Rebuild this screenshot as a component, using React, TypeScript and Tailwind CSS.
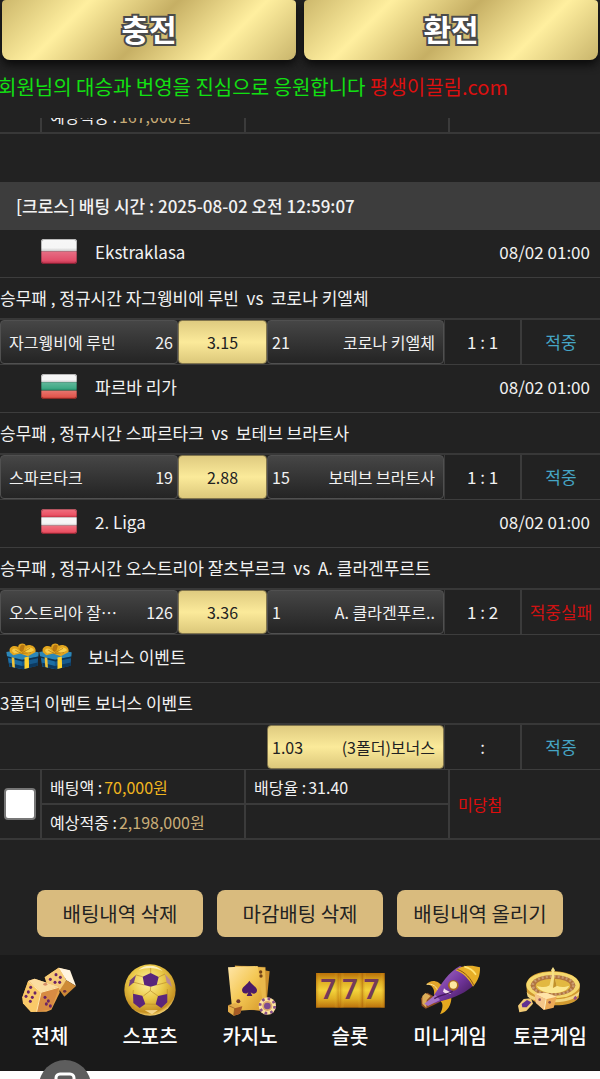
import { useState } from 'react';
import type { ReactNode } from 'react';

interface Match {
  league: string;
  flag: string[];
  time: string;
  title: string;
  home: string;
  homeOdds: string;
  drawOdds: string;
  awayOdds: string;
  away: string;
  score: string;
  status: string;
  won: boolean;
}

const matches: Match[] = [
  {
    league: 'Ekstraklasa',
    flag: ['#f4f4f4', '#dc3050'],
    time: '08/02 01:00',
    title: '승무패 , 정규시간 자그웽비에 루빈  vs  코로나 키엘체',
    home: '자그웽비에 루빈',
    homeOdds: '26',
    drawOdds: '3.15',
    awayOdds: '21',
    away: '코로나 키엘체',
    score: '1 : 1',
    status: '적중',
    won: true
  },
  {
    league: '파르바 리가',
    flag: ['#f4f4f4', '#1f9a70', '#dc3a30'],
    time: '08/02 01:00',
    title: '승무패 , 정규시간 스파르타크  vs  보테브 브라트사',
    home: '스파르타크',
    homeOdds: '19',
    drawOdds: '2.88',
    awayOdds: '15',
    away: '보테브 브라트사',
    score: '1 : 1',
    status: '적중',
    won: true
  },
  {
    league: '2. Liga',
    flag: ['#e8354a', '#f4f4f4', '#e8354a'],
    time: '08/02 01:00',
    title: '승무패 , 정규시간 오스트리아 잘츠부르크  vs  A. 클라겐푸르트',
    home: '오스트리아 잘⋯',
    homeOdds: '126',
    drawOdds: '3.36',
    awayOdds: '1',
    away: 'A. 클라겐푸르..',
    score: '1 : 2',
    status: '적중실패',
    won: false
  }
];

function Flag({ colors }: { colors: string[] }) {
  const h = 25 / colors.length;
  return (
    <svg viewBox="0 0 36 25" className="h-[25px] w-9 rounded-[3px]" aria-hidden="true">
      <defs>
        <linearGradient id="gloss" x1="0" y1="0" x2="0" y2="1">
          <stop offset="0" stopColor="#fff" stopOpacity="0.3" />
          <stop offset="0.7" stopColor="#fff" stopOpacity="0.15" />
          <stop offset="1" stopColor="#000" stopOpacity="0.2" />
        </linearGradient>
      </defs>
      {colors.map((color, i) => (
        <g key={i}>
          <rect y={i * h} width="36" height={h} fill={color} />
          <rect y={i * h} width="36" height={h} fill="url(#gloss)" />
        </g>
      ))}
      <rect x="0.5" y="0.5" width="35" height="24" rx="2.5" fill="none" stroke="#000" strokeOpacity="0.25" />
    </svg>
  );
}

function Gift() {
  return (
    <svg viewBox="18 252 100 82" className="h-[27px] w-[33px]" aria-hidden="true">
      <path d="M22 284 L66 293 L116 282 L114 321 L70 332 L28 323 Z" fill="#16598c" />
      <path d="M22 284 L66 293 L66 331 L28 323 Z" fill="#1c6fa5" />
      <path d="M28 312 L67 322 L114 311 V321 L70 332 L28 323 Z" fill="#0d395f" />
      <path d="M19 279 L62 272 L117 280 L116 293 L67 303 L21 292 Z" fill="#2c87b8" />
      <path d="M21 292 L67 303 L116 293 L115 298 L67 308 L23 297 Z" fill="#0b3455" />
      <path d="M35 295 L43 297 L45 327 L37 325 Z" fill="#efc23a" />
      <path d="M74 296 L87 293 L88 327 L74 331 Z" fill="#ffd22e" />
      <path d="M30 280 C24 268 38 256 55 264 C54 252 76 250 78 260 C93 254 112 264 107 280 L84 292 L61 284 L40 289 Z" fill="#e2a51e" />
      <path d="M36 276 C38 264 51 267 61 280 L43 284 Z" fill="#f6cb4a" />
      <path d="M61 276 C56 262 66 253 75 260 L70 278 Z" fill="#b87812" />
      <path d="M76 278 C81 262 98 262 103 274 L86 284 Z" fill="#f9cf4a" />
      <path d="M55 266 L68 281 L91 268 M46 274 L65 284 L94 281" fill="none" stroke="#a86f12" strokeWidth="2" />
    </svg>
  );
}

function DiceIcon() {
  const pips = [
    [92, 352], [85, 366], [105, 369], [78, 379], [97, 382], [91, 394],
    [135, 382], [145, 393], [151, 408], [139, 402],
    [151, 328], [168, 314], [165, 337], [181, 322], [179, 337]
  ];
  return (
    <svg viewBox="45 279 210 162" className="h-[54px] w-[70px]" aria-hidden="true">
      <path d="M134 322 L176 293 L202 300 L183 363 L142 349 Z" fill="#efb65c" />
      <path d="M176 293 L210 301 L228 348 L199 331 Z" fill="#fff4df" />
      <path d="M199 331 L228 348 L193 380 L176 357 Z" fill="#cd8a36" />
      <path d="M134 322 L176 293 L199 331 L180 359 L146 347 Z" fill="#f6cb78" />
      <path d="M85 332 L104 326 L176 350 L179 368 L154 419 L139 425 L93 426 L69 400 L67 382 Z" fill="#e5a04a" />
      <path d="M86 332 L104 326 L176 350 L123 367 Z" fill="#fbdda0" />
      <path d="M84 334 L123 367 L110 425 L93 426 L69 400 L67 382 Z" fill="#f9c969" />
      <path d="M123 367 L177 353 L154 418 L110 425 Z" fill="#d78b43" />
      <path d="M85 334 L123 367 L176 352 M123 367 L110 425" fill="none" stroke="#ffe8af" strokeWidth="3" />
      {pips.map(([x, y], i) => (
        <ellipse key={i} cx={x} cy={y} rx="4.5" ry="5" fill="#6b2466" />
      ))}
      <ellipse cx="136" cy="343" rx="6" ry="4" fill="#d58d68" />
      <ellipse cx="194" cy="364" rx="5" ry="4" fill="#6b2f43" />
    </svg>
  );
}

function BallIcon() {
  return (
    <svg viewBox="345 279 210 162" className="h-[54px] w-[70px]" aria-hidden="true">
      <defs>
        <radialGradient id="ball" cx="0.45" cy="0.35" r="0.65">
          <stop offset="0" stopColor="#fff3a2" />
          <stop offset="0.5" stopColor="#eac948" />
          <stop offset="0.9" stopColor="#c48f22" />
          <stop offset="1" stopColor="#f3d070" />
        </radialGradient>
        <clipPath id="ball-clip">
          <circle cx="450" cy="360" r="77" />
        </clipPath>
      </defs>
      <circle cx="450" cy="360" r="77" fill="url(#ball)" />
      <g clipPath="url(#ball-clip)">
        <path
          d="M452 350 L451 362 L430 378 M451 362 L474 378 M470 345 L500 337 M433 345 L402 337 M400 360 L399 371 M502 357 V372 M436 402 L467 403 M428 320 L408 315 M476 321 L495 312 M452 309 V290"
          fill="none"
          stroke="#b98b28"
          strokeWidth="2"
        />
        <path d="M452 309 L476 321 L470 345 L452 350 L433 345 L428 320 Z" fill="#59257b" />
        <path d="M399 371 L427 377 L436 402 L419 414 L400 399 Z" fill="#5b267a" />
        <path d="M474 378 L502 372 L502 397 L484 414 L467 403 Z" fill="#5b267a" />
        <path d="M408 315 L402 337 L386 350 L390 331 Z" fill="#74447c" />
        <path d="M495 312 L510 329 L516 352 L500 337 Z" fill="#b98a94" />
        <path d="M434 421 L474 420 L456 433 Z" fill="#f5d68c" />
        <path d="M416 300 C433 283 468 282 488 303 C463 291 440 292 416 300 Z" fill="#fff9d7" opacity="0.8" />
      </g>
    </svg>
  );
}

function CardsIcon() {
  return (
    <svg viewBox="645 279 210 162" className="h-[54px] w-[70px]" aria-hidden="true">
      <defs>
        <linearGradient id="card" x1="0" y1="0" x2="1" y2="1">
          <stop offset="0" stopColor="#ffe6a8" />
          <stop offset="0.5" stopColor="#f4c855" />
          <stop offset="1" stopColor="#d79a2a" />
        </linearGradient>
      </defs>
      <path d="M728 288 L809 304 L797 425 L715 414 Z" fill="#c98d2c" />
      <path d="M705 287 L796 292 L800 421 L713 417 Z" fill="#eab84b" stroke="#b98029" strokeWidth="1" />
      <path d="M684 292 L773 288 L791 417 L697 424 Z" fill="url(#card)" />
      <path d="M748 332 C754 344 771 350 771 361 C771 372 758 374 752 367 L757 378 H740 L745 367 C739 374 726 371 726 360 C727 349 743 343 748 332 Z" fill="#4b1b67" />
      <circle cx="782" cy="306" r="5" fill="#704017" />
      <circle cx="783" cy="318" r="5" fill="#704017" />
      <circle cx="715" cy="394" r="6" fill="#70372d" />
      <path d="M684 406 L705 399 L727 409 L720 431 L701 437 L684 425 Z" fill="#e5ad4a" />
      <path d="M704 415 L727 409 L720 431 L701 437 Z" fill="#a75a25" />
      <path d="M684 406 L704 415 L701 436" fill="none" stroke="#8a5620" strokeWidth="2" />
      <circle cx="802" cy="408" r="26" fill="#ffe4a1" />
      <circle cx="802" cy="408" r="22" fill="none" stroke="#88508a" strokeWidth="8" strokeDasharray="8 9.3" />
      <circle cx="802" cy="408" r="15" fill="#dcaa6b" />
      <circle cx="802" cy="408" r="10" fill="#7e4b8f" />
    </svg>
  );
}

function SlotIcon() {
  return (
    <svg viewBox="45 279 210 162" className="h-[54px] w-[70px]" aria-hidden="true">
      <defs>
        <linearGradient id="slot-v" x1="0" y1="0" x2="0" y2="1">
          <stop offset="0" stopColor="#b86f08" />
          <stop offset="0.25" stopColor="#dfae24" />
          <stop offset="0.5" stopColor="#f4d33b" />
          <stop offset="0.75" stopColor="#dfae24" />
          <stop offset="1" stopColor="#bb710c" />
        </linearGradient>
        <linearGradient id="slot-h">
          <stop offset="0" stopColor="#a85904" stopOpacity="0.5" />
          <stop offset="0.2" stopColor="#f4d33b" stopOpacity="0" />
          <stop offset="0.8" stopColor="#f4d33b" stopOpacity="0" />
          <stop offset="1" stopColor="#a85904" stopOpacity="0.5" />
        </linearGradient>
      </defs>
      <rect x="48" y="309" width="206" height="104" fill="url(#slot-v)" />
      {[48, 119, 186].map((x) => (
        <rect key={x} x={x} y="309" width="68" height="104" fill="url(#slot-h)" />
      ))}
      <g fill="#743b59" fontFamily="Roboto, sans-serif" fontSize="82" fontWeight="700" textAnchor="middle">
        <text x="85" y="387">7</text>
        <text x="150" y="387">7</text>
        <text x="215" y="387">7</text>
      </g>
    </svg>
  );
}

function RocketIcon() {
  return (
    <svg viewBox="345 279 210 162" className="h-[54px] w-[70px]" aria-hidden="true">
      <defs>
        <linearGradient id="rocket" x1="0" y1="0" x2="1" y2="1">
          <stop offset="0" stopColor="#b079cd" />
          <stop offset="0.5" stopColor="#7437a0" />
          <stop offset="1" stopColor="#351144" />
        </linearGradient>
      </defs>
      <path d="M382 368 L363 385 L365 407 L377 416 L403 404 L421 395 L403 380 Z" fill="#8f4e23" />
      <path d="M429 352 C415 328 391 328 379 343 C397 345 405 357 402 376 Z" fill="#e2a52b" />
      <path d="M380 343 C397 340 413 349 414 369" fill="none" stroke="#ffe69a" strokeWidth="3" />
      <path d="M421 393 C433 402 426 421 420 433 C442 426 455 404 454 381 Z" fill="#e6a91f" />
      <path d="M367 378 L376 369 L392 378 L380 391 L379 413 L367 401 Z" fill="#ddad58" />
      <path d="M402 376 C424 342 446 305 480 288 C497 294 514 315 522 344 C500 367 464 383 424 393 L405 400 Z" fill="url(#rocket)" />
      <path d="M373 401 L406 374 L420 390 L384 408 Z" fill="#a673c4" />
      <path d="M467 301 C479 288 511 282 540 292 C541 316 534 333 519 350 C510 332 490 308 467 301 Z" fill="#e7ae27" />
      <path d="M472 298 C496 306 514 328 521 346" fill="none" stroke="#8b5316" strokeWidth="3" />
      <path d="M493 290 C509 294 520 302 528 314" fill="none" stroke="#ffe374" strokeWidth="5" />
      <circle cx="460" cy="346" r="16" fill="#a8691f" />
      <circle cx="460" cy="345" r="11" fill="#ffe7a0" />
      <path d="M432 355 C438 363 448 362 453 371 L440 373 L429 365 Z" fill="#f4ddeb" />
      <path d="M403 386 C423 372 445 374 458 364" fill="none" stroke="#44175b" strokeWidth="4" />
    </svg>
  );
}

function RouletteIcon() {
  return (
    <svg viewBox="645 279 210 162" className="h-[54px] w-[70px]" aria-hidden="true">
      <path d="M679 347 C680 315 722 303 759 304 C802 304 838 320 840 348 L836 383 C823 402 789 407 761 406 C718 405 682 391 681 367 Z" fill="#d19a30" />
      <path d="M680 366 C704 393 802 400 838 364 L836 376 C805 404 714 404 683 380 Z" fill="#f3d67f" />
      <ellipse cx="759" cy="345" rx="80" ry="40" fill="#f5d96f" />
      <ellipse cx="759" cy="346" rx="67" ry="31" fill="#b0743f" />
      <ellipse cx="759" cy="346" rx="61" ry="27" fill="none" stroke="#c89a70" strokeWidth="8" strokeDasharray="6 6" />
      <ellipse cx="759" cy="348" rx="52" ry="22" fill="#e2b840" />
      <path d="M710 347 C734 356 748 349 759 339 C771 350 786 355 808 347 C802 363 778 369 759 369 C737 369 717 362 710 347 Z" fill="#fbe790" />
      <path d="M755 318 H763 L761 308 L765 301 L759 291 L753 301 L757 309 Z M755 318 L748 348 L759 354 L770 348 L763 318 Z" fill="#f6e08a" />
      <path d="M763 318 L770 348 L759 354 Z" fill="#c1912a" />
      <path d="M654 407 L671 387 L693 385 L699 401 L679 423 L658 427 Z" fill="#f2cb77" />
      <path d="M665 402 L681 390 L694 397 L680 412 L667 412 Z" fill="#603092" />
      <path d="M704 371 L739 368 L770 380 L761 413 L732 420 L707 398 Z" fill="#eca957" />
      <path d="M704 371 L739 368 L770 380 L738 388 Z" fill="#ffe4a8" />
      <path d="M704 371 L738 388 L732 420 L708 399 Z" fill="#f5c68a" />
      <path d="M738 388 L733 418" stroke="#fff0c1" strokeWidth="3" />
      <circle cx="719" cy="389" r="4" fill="#975160" />
      <circle cx="749" cy="397" r="4" fill="#8c4d41" />
      <path d="M820 385 L826 377 L832 383 L825 391 Z" fill="#955083" />
    </svg>
  );
}

function LeagueRow({ icon, name, time }: { icon: ReactNode; name: string; time?: string }) {
  return (
    <div className="flex h-12 items-center border-b border-[#3d3d3d] pr-2.5 pb-1">
      {icon}
      <span>{name}</span>
      {time && <time className="ml-auto">{time}</time>}
    </div>
  );
}

function TitleRow({ children }: { children: ReactNode }) {
  return <div className="flex h-[42px] items-center border-b-2 border-[#383838] whitespace-pre">{children}</div>;
}

const rowGrid = 'grid h-[45px] grid-cols-[178fr_89fr_177fr_78fr_78fr] border-b border-[#3d3d3d] text-base';
const teamCell = 'flex items-center justify-between rounded border border-[#505050] bg-linear-to-b from-[#464646] to-[#242424]';
const goldCell = 'rounded border border-[#81754d] bg-linear-to-b from-[#dfcb80] via-[#fbea9a] to-[#dcc87b] text-[#222]';
const scoreCell = 'flex items-center justify-center border-r-2 border-l border-[#3b3b3b] text-[17px]';
const statusCell = 'flex items-center justify-center text-[17px]';

function MatchRow({ match }: { match: Match }) {
  return (
    <section>
      <LeagueRow
        icon={<div className="mr-[18px] ml-[41px]"><Flag colors={match.flag} /></div>}
        name={match.league}
        time={match.time}
      />
      <TitleRow>{match.title}</TitleRow>
      <div className={rowGrid}>
        <div className={`${teamCell} pr-1 pl-2`}>
          <span>{match.home}</span>
          <span>{match.homeOdds}</span>
        </div>
        <div className={`${goldCell} flex items-center justify-center`}>{match.drawOdds}</div>
        <div className={`${teamCell} pr-2 pl-1`}>
          <span>{match.awayOdds}</span>
          <span>{match.away}</span>
        </div>
        <div className={scoreCell}>{match.score}</div>
        <div className={`${statusCell} ${match.won ? 'text-[#46a6c6]' : 'text-[#d01212]'}`}>
          {match.status}
        </div>
      </div>
    </section>
  );
}

const navItems = [
  { label: '전체', icon: <DiceIcon /> },
  { label: '스포츠', icon: <BallIcon /> },
  { label: '카지노', icon: <CardsIcon /> },
  { label: '슬롯', icon: <SlotIcon /> },
  { label: '미니게임', icon: <RocketIcon /> },
  { label: '토큰게임', icon: <RouletteIcon /> }
];

export default function App() {
  const [checked, setChecked] = useState(false);

  return (
    <div className="flex min-h-screen flex-col overflow-hidden bg-[#222] font-['Noto_Sans_CJK_KR','Noto_Sans',sans-serif] text-[17px] leading-6 text-[#f2f2f2]">
      <header className="grid grid-cols-2 gap-2 px-0.5">
        {['충전', '환전'].map((label) => (
          <button
            key={label}
            className="h-[60px] rounded-t-sm rounded-b-lg bg-[linear-gradient(135deg,#cdb86c_0%,#ffef9f_25%,#c6af64_50%,#ffef9f_75%,#c9b56c_100%)] pb-1 text-[30px] font-bold text-white shadow-[0_5px_8px_#0c0c0c] [-webkit-text-stroke:4px_#4a4a4a] [paint-order:stroke_fill]"
          >
            {label}
          </button>
        ))}
      </header>

      <div className="flex h-[58px] items-center overflow-hidden pb-1 text-xl whitespace-nowrap">
        <p className="-ml-0.5 text-[#12e012]">
          회원님의 대승과 번영을 진심으로 응원합니다 <span className="text-[#dc1010]">평생이끌림.com</span>
        </p>
      </div>

      <main>
        <div className="flex h-4 flex-col justify-end overflow-hidden border-b-2 border-[#383838] text-base">
          <div className="grid h-[33px] shrink-0 grid-cols-[42fr_204fr_204fr_150fr]">
            <span className="border-r-2 border-[#3b3b3b]" />
            <span className="flex items-center border-r-2 border-[#3b3b3b] pl-2">
              예상적중 :<span className="ml-0.5 text-[#c9ad78]">167,000원</span>
            </span>
            <span className="border-r-2 border-[#3b3b3b]" />
          </div>
        </div>

        <h2 className="mt-12 flex h-12 items-center bg-[#3d3d3d] px-4 font-medium">
          [크로스] 배팅 시간 : 2025-08-02 오전 12:59:07
        </h2>

        {matches.map((match) => (
          <MatchRow key={match.league} match={match} />
        ))}

        <section>
          <LeagueRow icon={<div className="mr-4 ml-1.5 flex"><Gift /><Gift /></div>} name="보너스 이벤트" />
          <TitleRow>3폴더 이벤트 보너스 이벤트</TitleRow>
          <div className={rowGrid}>
            <div className={`${goldCell} col-start-3 flex items-center justify-between pr-2 pl-1`}>
              <span>1.03</span>
              <span>(3폴더)보너스</span>
            </div>
            <div className={scoreCell}>:</div>
            <div className={`${statusCell} text-[#46a6c6]`}>적중</div>
          </div>
        </section>

        <table className="w-full table-fixed border-separate border-spacing-0 border-b-2 border-[#383838] text-base">
          <colgroup>
            <col className="w-[7%]" />
            <col className="w-[34%]" />
            <col className="w-[34%]" />
            <col className="w-[25%]" />
          </colgroup>
          <tbody>
            <tr className="h-[35px]">
              <td rowSpan={2} className="border-r-2 border-[#3b3b3b] pl-1">
                <input
                  type="checkbox"
                  aria-label="배팅내역 선택"
                  checked={checked}
                  onChange={(e) => setChecked(e.target.checked)}
                  className="block size-8 appearance-none rounded border-2 border-[#777] bg-white checked:bg-[#d9bb7e]"
                />
              </td>
              <td className="border-r-2 border-b-2 border-[#3b3b3b] pl-2">
                배팅액 :<span className="ml-0.5 text-[#f0b51f]">70,000원</span>
              </td>
              <td className="border-r-2 border-b-2 border-[#3b3b3b] pl-2">
                배당율 :<span className="ml-0.5">31.40</span>
              </td>
              <td rowSpan={2} className="pl-2 text-[#e00d0d]">미당첨</td>
            </tr>
            <tr className="h-[33px]">
              <td className="border-r-2 border-[#3b3b3b] pl-2">
                예상적중 :<span className="ml-0.5 text-[#c9ad78]">2,198,000원</span>
              </td>
              <td className="border-r-2 border-[#3b3b3b]" />
            </tr>
          </tbody>
        </table>

        <div className="mt-[50px] mb-[18px] grid grid-cols-3 gap-3.5 px-[37px]">
          {['배팅내역 삭제', '마감배팅 삭제', '배팅내역 올리기'].map((label) => (
            <button key={label} className="h-[47px] rounded-lg bg-[#d9bb7e] text-xl text-[#222]">
              {label}
            </button>
          ))}
        </div>
      </main>

      <nav className="grid h-[116px] grid-cols-6 bg-[#1a1a1a] pt-2">
        {navItems.map((item) => (
          <a key={item.label} href="#" className="flex flex-col items-center gap-[5px] text-xl font-medium whitespace-nowrap text-white">
            {item.icon}
            {item.label}
          </a>
        ))}
      </nav>

      <div className="relative min-h-2 flex-1 bg-white">
        <button
          aria-label="화면"
          className="absolute -top-[11px] left-[39px] flex size-[52px] items-center justify-center rounded-full bg-[#5d5d5d]"
        >
          <svg viewBox="0 0 24 30" className="h-[30px] w-6" fill="none" stroke="#fff" strokeWidth="3" aria-hidden="true">
            <rect x="3" y="3" width="18" height="24" rx="4" />
          </svg>
        </button>
      </div>
    </div>
  );
}
